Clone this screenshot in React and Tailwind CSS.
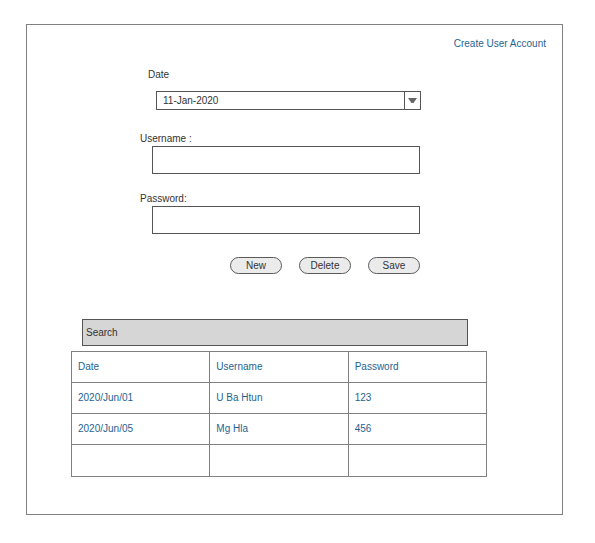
import React from "react";

const rows = [
  ["2020/Jun/01", "U Ba Htun", "123"],
  ["2020/Jun/05", "Mg Hla", "456"],
  ["", "", ""],
];

function TextField({ id, label, type }) {
  return (
    <div className="flex flex-col gap-px">
      <label htmlFor={id} className="self-start">
        {label}
      </label>
      <input
        id={id}
        type={type}
        className="ml-3 h-7 border border-[#555] bg-white px-1.5 outline-none"
      />
    </div>
  );
}

function PillButton({ children }) {
  return (
    <button
      type="button"
      className="flex h-[17px] w-[52px] items-center justify-center rounded-full border border-[#5a5a5a] bg-[#ebebeb]"
    >
      {children}
    </button>
  );
}

export default function App() {
  return (
    <div className="bg-white pt-6 pr-8 pb-7 pl-[26px] font-['Liberation_Sans',Arial,sans-serif] text-[10px] leading-3 text-[#333]">
      <main className="flex flex-col border border-[#808080] pt-[13px] pb-[37px]">
        <a href="#create" className="mr-4 self-end text-[#1f6391]">
          Create User Account
        </a>

        <form className="mt-[19px] mr-[141px] ml-[113px] flex flex-col">
          <label htmlFor="date" className="ml-2 self-start">
            Date
          </label>
          <div className="relative mt-[10px] ml-4 flex">
            <select
              id="date"
              className="h-[19px] w-full appearance-none border border-[#555] bg-white pr-5 pl-1.5 outline-none"
            >
              <option>11-Jan-2020</option>
            </select>
            <span className="pointer-events-none absolute inset-y-0 right-0 flex w-[17px] items-center justify-center border border-[#555]">
              <svg width="9" height="5" viewBox="0 0 9 5" aria-hidden="true">
                <path d="M0 0h9L5.5 5h-2z" fill="#666" />
              </svg>
            </span>
          </div>

          <div className="mt-[23px] mr-px flex flex-col gap-[19px]">
            <TextField id="username" label="Username :" type="text" />
            <TextField id="password" label="Password:" type="password" />
          </div>

          <div className="mt-[23px] mr-px flex justify-end gap-[17px]">
            <PillButton>New</PillButton>
            <PillButton>Delete</PillButton>
            <PillButton>Save</PillButton>
          </div>
        </form>

        <section className="mt-[45px] mr-[75px] ml-11 flex flex-col gap-[5px]">
          <input
            type="search"
            aria-label="Search"
            placeholder="Search"
            className="mr-[19px] ml-[11px] h-[27px] appearance-none border border-[#555] bg-[#d6d6d6] px-[3px] outline-none placeholder:text-[#333]"
          />
          <table className="w-full table-fixed border-collapse text-left text-[#1f6391]">
            <thead>
              <tr className="h-[31px]">
                <th className="border border-[#808080] px-1.5 font-normal">Date</th>
                <th className="border border-[#808080] px-1.5 font-normal">Username</th>
                <th className="border border-[#808080] px-1.5 font-normal">Password</th>
              </tr>
            </thead>
            <tbody>
              {rows.map((row, i) => (
                <tr key={i} className="h-[31px] last:h-8">
                  {row.map((cell, j) => (
                    <td key={j} className="border border-[#808080] px-1.5">
                      {cell}
                    </td>
                  ))}
                </tr>
              ))}
            </tbody>
          </table>
        </section>
      </main>
    </div>
  );
}
